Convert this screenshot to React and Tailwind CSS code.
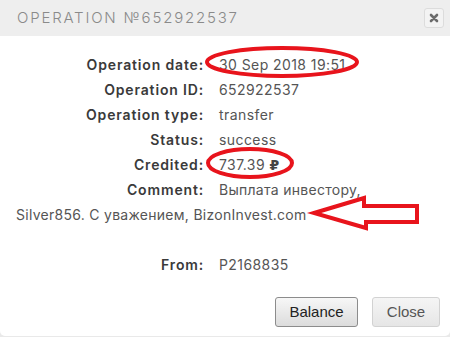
import React from "react";

const rows = [
  { label: "Operation date:", value: "30 Sep 2018 19:51" },
  { label: "Operation ID:", value: "652922537" },
  { label: "Operation type:", value: "transfer" },
  { label: "Status:", value: "success" },
];

function Row({ label, children }) {
  return (
    <div className="flex h-[25px] items-center">
      <span className="w-[188px] shrink-0 text-right font-semibold tracking-[0.06em] text-[#3a3a3a]">{label}</span>
      <span className="ml-[15px] tracking-[0.03em] text-[#555]">{children}</span>
    </div>
  );
}

function Annotations() {
  return (
    <svg className="pointer-events-none absolute left-0 top-0" width="450" height="337" viewBox="0 0 450 337" fill="none">
      <ellipse cx="282" cy="62" rx="75" ry="14" stroke="#e8141c" strokeWidth="4" />
      <ellipse cx="250" cy="163" rx="42" ry="14" stroke="#e8141c" strokeWidth="4" />
      <path d="M314 213 L364 198 L364 206 L417 206 L417 222 L366 222 L366 228 Z" stroke="#e8141c" strokeWidth="4" strokeLinejoin="miter" />
    </svg>
  );
}

export default function App() {
  return (
    <div className="h-[337px] w-[450px] bg-[#e9e9e9]">
      <div className="relative h-[336px] w-[450px] overflow-hidden rounded-b-[5px] bg-white font-['Inter',sans-serif] text-[14px]">
        <div className="flex h-[36px] items-center justify-between bg-[#eeeeee] pl-[17px] pr-[6px]">
          <span className="text-[15px] font-light tracking-[0.12em] text-[#8a8a8a]">OPERATION №652922537</span>
          <button className="flex h-[20px] w-[20px] items-center justify-center rounded-[3px] border border-[#dcdcdc] bg-[#f3f3f3]">
            <svg width="10" height="10" viewBox="0 0 10 10">
              <path d="M2 2 L8 8 M8 2 L2 8" stroke="#6b6b6b" strokeWidth="2.6" strokeLinecap="round" />
            </svg>
          </button>
        </div>

        <div className="pl-[16px] pr-[16px] pt-[16px]">
          {rows.map((r) => (
            <Row key={r.label} label={r.label}>{r.value}</Row>
          ))}
          <Row label="Credited:">
            737.39 <span className="font-['DejaVu_Sans',sans-serif] font-bold text-[#444]">₽</span>
          </Row>
          <p className="leading-[25px] tracking-[0.02em] text-[#555]">
            <span className="mr-[15px] inline-block w-[188px] text-right font-semibold tracking-[0.06em] text-[#3a3a3a]">Comment:</span>
            Выплата инвестору,
            <br />
            Silver856. С уважением, BizonInvest.com
          </p>
          <div className="h-[25px]" />
          <Row label="From:">P2168835</Row>
        </div>

        <div className="mt-[20px] flex justify-end gap-[14px] pr-[10px] font-['Liberation_Sans',sans-serif] text-[15px]">
          <button className="h-[30px] w-[83px] rounded-[3px] border border-[#8c8c8c] bg-gradient-to-b from-[#f7f7f7] to-[#dcdcdc] text-[#222]">
            Balance
          </button>
          <button className="h-[30px] w-[68px] rounded-[3px] border border-[#d2d2d2] bg-gradient-to-b from-[#f5f5f5] to-[#e6e6e6] text-[#555]">
            Close
          </button>
        </div>

        <Annotations />
      </div>
    </div>
  );
}
